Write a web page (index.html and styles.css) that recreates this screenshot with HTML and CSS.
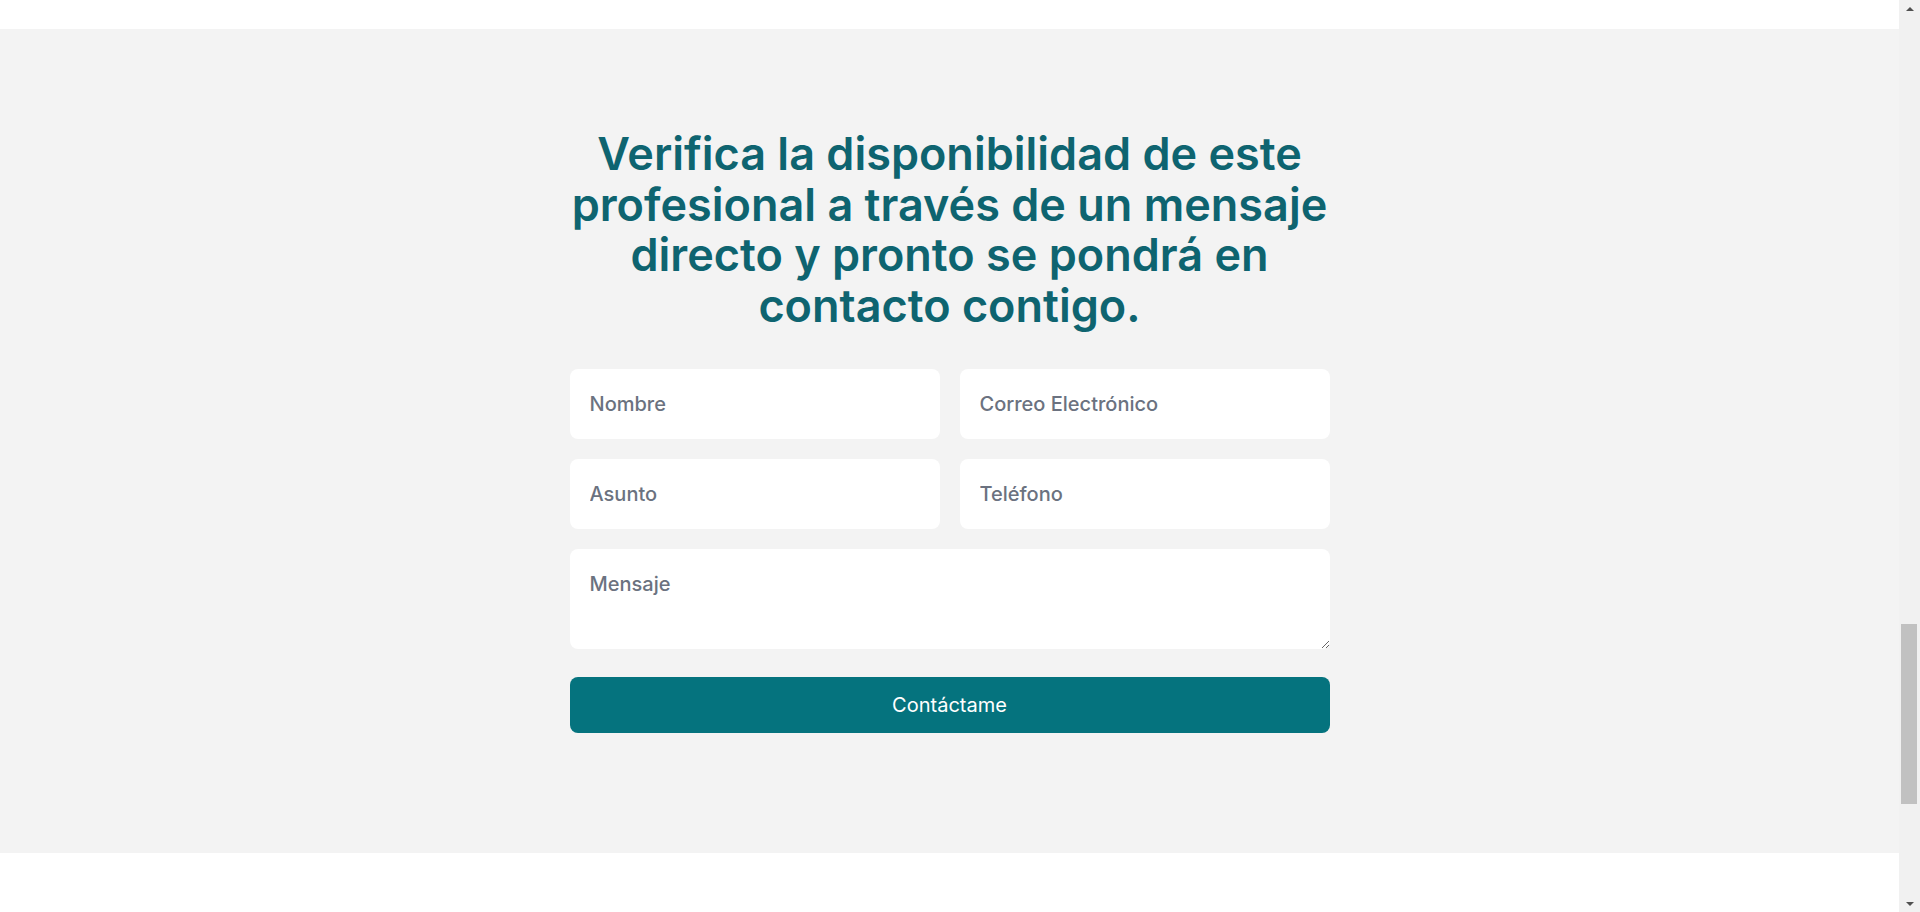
FILE: index.html
```html
<!DOCTYPE html>
<html lang="es">
<head>
  <meta charset="UTF-8">
  <meta name="viewport" content="width=device-width, initial-scale=1.0">
  <title>Contacto</title>
  <link rel="stylesheet" href="styles.css">
</head>
<body>

  <div class="page">
    <div class="spacer-top"></div>

    <section class="contact">
      <div class="contact-inner">
        <h2 class="contact-title">Verifica la disponibilidad de este profesional a través de un mensaje directo y pronto se pondrá en contacto contigo.</h2>

        <form class="contact-form" onsubmit="return false;">
          <div class="form-grid">
            <input type="text" class="field" name="nombre" placeholder="Nombre">
            <input type="email" class="field" name="email" placeholder="Correo Electrónico">
            <input type="text" class="field" name="asunto" placeholder="Asunto">
            <input type="tel" class="field" name="telefono" placeholder="Teléfono">
          </div>
          <textarea class="field field-message" name="mensaje" placeholder="Mensaje"></textarea>
          <button type="submit" class="btn-submit">Contáctame</button>
        </form>
      </div>
    </section>

    <div class="spacer-bottom"></div>
  </div>

  <!-- scrollbar as seen in the capture -->
  <div class="scrollbar">
    <div class="scroll-arrow up"></div>
    <div class="scroll-track">
      <div class="scroll-thumb"></div>
    </div>
    <div class="scroll-arrow down"></div>
  </div>

</body>
</html>
```

FILE: styles.css
```css
body {
  margin: 0;
  height: 912px;
  overflow: hidden;
  display: flex;
  font-family: Inter, "Noto Sans", Arial, sans-serif;
  background-color: #fff;
}

.page {
  flex: 1;
  display: flex;
  flex-direction: column;
}

.spacer-top {
  height: 29px;
  background-color: #fff;
}

.spacer-bottom {
  flex: 1;
  background-color: #fff;
}

.contact {
  background-color: #f3f3f3;
  padding: 100px 0 120px;
}

.contact-inner {
  width: 760px;
  margin: 0 auto;
}

.contact-title {
  margin: 0 0 38px;
  text-align: center;
  color: #0e6470;
  font-size: 45px;
  font-weight: 600;
  line-height: 50.5px;
}

.form-grid {
  display: grid;
  grid-template-columns: 1fr 1fr;
  gap: 20px;
  margin-bottom: 20px;
}

.field {
  display: block;
  box-sizing: border-box;
  width: 100%;
  height: 70px;
  padding: 0 20px;
  border: none;
  border-radius: 8px;
  background-color: #fff;
  font-family: inherit;
  font-size: 20px;
  font-weight: 500;
  color: #374151;
}

.field::placeholder {
  color: #6b7280;
  opacity: 1;
}

.field-message {
  height: 100px;
  padding: 23px 20px;
  line-height: 24px;
}

.btn-submit {
  display: block;
  width: 100%;
  height: 56px;
  margin-top: 28px;
  border: none;
  border-radius: 8px;
  background-color: #05737e;
  color: #fff;
  font-family: inherit;
  font-size: 20px;
  cursor: pointer;
}

.btn-submit:hover {
  background-color: #04656f;
}

.scrollbar {
  width: 21px;
  display: flex;
  flex-direction: column;
  background-color: #f1f1f1;
}

.scroll-arrow {
  height: 17px;
  display: flex;
  align-items: center;
  justify-content: center;
}

.scroll-arrow::after {
  content: "";
  border-left: 4px solid transparent;
  border-right: 4px solid transparent;
}

.scroll-arrow.up::after {
  border-bottom: 4px solid #505050;
}

.scroll-arrow.down::after {
  border-top: 4px solid #505050;
}

.scroll-track {
  flex: 1;
  padding-top: 607px;
}

.scroll-thumb {
  width: 16px;
  height: 180px;
  margin-left: 2px;
  background-color: #c1c1c1;
}
```
